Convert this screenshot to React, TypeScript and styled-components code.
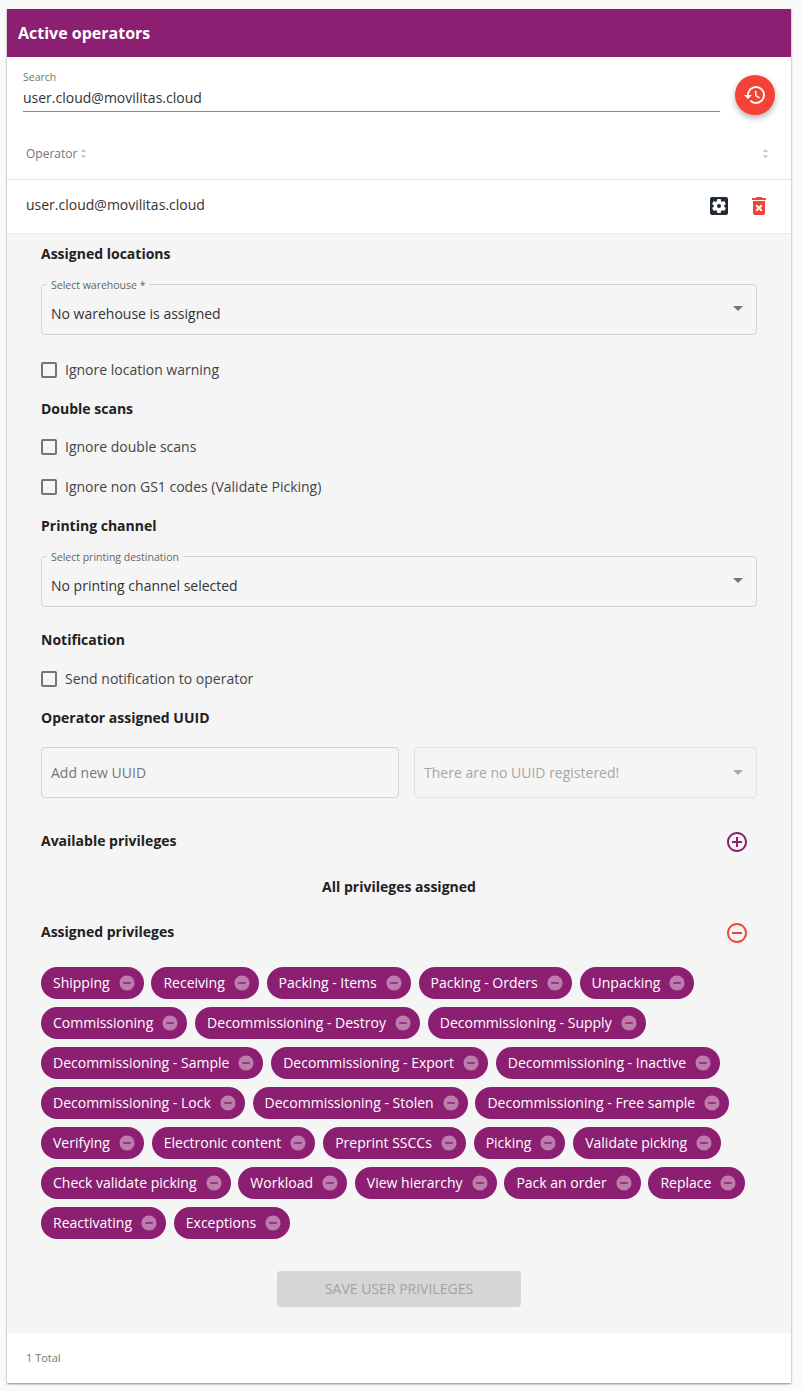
import React from "react";
import styled, { createGlobalStyle } from "styled-components";
import {
  MdAddCircleOutline,
  MdArrowDropDown,
  MdDeleteForever,
  MdRemoveCircle,
  MdRemoveCircleOutline,
  MdRestore,
  MdSettingsApplications,
  MdUnfoldMore,
} from "react-icons/md";

const GlobalStyle = createGlobalStyle`
  html, body {
    margin: 0;
    padding: 0;
    background-color: #fafafa;
    font-family: "Open Sans", "Liberation Sans", sans-serif;
    color: #212121;
  }
  * {
    box-sizing: border-box;
  }
`;

const Page = styled.div`
  width: 803px;
  height: 1391px;
  padding: 9px 12px 8px 7px;
`;

const Card = styled.div`
  width: 784px;
  background-color: #fff;
  box-shadow: 0 1px 2px rgba(0, 0, 0, 0.45);
`;

const Header = styled.div`
  height: 48px;
  display: flex;
  align-items: center;
  padding-left: 11px;
  background-color: #8c1f72;
  color: #fff;
  font-size: 16px;
  font-weight: 700;
`;

const SearchBar = styled.div`
  height: 75px;
  display: flex;
  align-items: flex-start;
  padding: 13px 16px 0;
  gap: 15px;
`;

const SearchField = styled.div`
  flex: 1;
  height: 42px;
  border-bottom: 1px solid #8a8a8a;
`;

const SearchLabel = styled.div`
  font-size: 10.5px;
  line-height: 14px;
  color: #757575;
`;

const SearchValue = styled.div`
  font-size: 14px;
  line-height: 20px;
  margin-top: 4px;
  color: #333;
`;

const Fab = styled.button`
  width: 40px;
  height: 40px;
  margin-top: 5px;
  border: none;
  border-radius: 50%;
  padding: 0;
  display: flex;
  align-items: center;
  justify-content: center;
  background-color: #f44336;
  color: #fff;
  font-size: 24px;
  box-shadow: 0 3px 6px rgba(0, 0, 0, 0.3);
`;

const HeadRow = styled.div`
  height: 48px;
  display: flex;
  align-items: center;
  justify-content: space-between;
  padding: 0 20px 4px 19px;
  border-bottom: 1px solid #e0e0e0;
  color: #757575;
  font-size: 12px;
`;

const HeadCell = styled.div`
  display: flex;
  align-items: center;
  gap: 1px;
  svg {
    font-size: 11px;
    color: #9e9e9e;
  }
`;

const OperatorRow = styled.div`
  height: 54px;
  display: flex;
  align-items: center;
  justify-content: space-between;
  padding: 0 19px 4px;
  border-bottom: 1px solid #eeeeee;
  font-size: 14px;
  color: #333;
`;

const RowActions = styled.div`
  display: flex;
  gap: 16px;
  margin-right: 1px;
  margin-top: 3px;
  font-size: 24px;
`;

const ActionIcon = styled.span<{ $color: string }>`
  display: flex;
  color: ${(p) => p.$color};
`;

const Panel = styled.div`
  height: 1099px;
  padding: 10px 34px 0;
  background-color: #f5f5f5;
`;

const SectionRow = styled.div<{ $top: number }>`
  margin-top: ${(p) => p.$top}px;
  height: 20px;
  display: flex;
  align-items: center;
  justify-content: space-between;
  font-size: 14px;
  font-weight: 700;
  line-height: 20px;
`;

const RoundIcon = styled.span<{ $color: string }>`
  display: flex;
  margin-right: 8px;
  margin-top: 2px;
  font-size: 24px;
  color: ${(p) => p.$color};
`;

const Outlined = styled.div<{ $top?: number; $disabled?: boolean; $labelled?: boolean }>`
  position: relative;
  height: 51px;
  margin-top: ${(p) => p.$top ?? 0}px;
  display: flex;
  align-items: center;
  justify-content: space-between;
  padding: ${(p) => (p.$labelled ? "7px" : "0")} 11px 0 9px;
  border: 1px solid ${(p) => (p.$disabled ? "#e3e3e3" : "#d4d4d4")};
  border-radius: 4px;
  font-size: 14px;
  color: ${(p) => (p.$disabled ? "#a6a6a6" : "#333")};
  svg {
    font-size: 24px;
    color: ${(p) => (p.$disabled ? "#a6a6a6" : "#757575")};
    margin: ${(p) => (p.$labelled ? "-10px" : "-2px")} -5px 0 0;
  }
`;

const FloatLabel = styled.span`
  position: absolute;
  top: -6px;
  left: 5px;
  padding: 0 4px;
  background-color: #f5f5f5;
  font-size: 10.5px;
  line-height: 13px;
  color: #666;
`;

const CheckRow = styled.label<{ $top: number }>`
  margin-top: ${(p) => p.$top}px;
  height: 20px;
  display: flex;
  align-items: center;
  gap: 8px;
  font-size: 14px;
  color: #444;
`;

const CheckText = styled.span`
  margin-bottom: 2px;
`;

const CheckBox = styled.span`
  width: 16px;
  height: 16px;
  border: 2px solid #757575;
  border-radius: 2px;
`;

const UuidRow = styled.div`
  margin-top: 19px;
  display: grid;
  grid-template-columns: 358px 343px;
  gap: 15px;
`;

const Placeholder = styled.span`
  color: #757575;
`;

const CenterNote = styled.div`
  margin-top: 26px;
  height: 20px;
  text-align: center;
  font-size: 14px;
  font-weight: 700;
  line-height: 20px;
`;

const ChipList = styled.div`
  margin-top: 25px;
  display: flex;
  flex-wrap: wrap;
  gap: 8px 7.8px;
`;

const Chip = styled.div`
  height: 32px;
  display: flex;
  align-items: center;
  padding: 0 8px 2px 12px;
  border-radius: 16px;
  background-color: #8c1f72;
  color: #fff;
  font-size: 14px;
  white-space: nowrap;
  svg {
    font-size: 18px;
    margin: 2px 0 0 8px;
    color: rgba(255, 255, 255, 0.42);
  }
`;

const ButtonRow = styled.div`
  margin-top: 32px;
  display: flex;
  justify-content: center;
`;

const SaveButton = styled.button`
  width: 244px;
  height: 36px;
  border: none;
  border-radius: 4px;
  padding: 0 0 2px;
  background-color: #d6d6d6;
  color: #a3a3a3;
  font-family: inherit;
  font-size: 14px;
`;

const Footer = styled.div`
  height: 50px;
  display: flex;
  align-items: center;
  padding: 0 0 2px 19px;
  font-size: 11px;
  color: #757575;
`;

const privileges = [
  "Shipping",
  "Receiving",
  "Packing - Items",
  "Packing - Orders",
  "Unpacking",
  "Commissioning",
  "Decommissioning - Destroy",
  "Decommissioning - Supply",
  "Decommissioning - Sample",
  "Decommissioning - Export",
  "Decommissioning - Inactive",
  "Decommissioning - Lock",
  "Decommissioning - Stolen",
  "Decommissioning - Free sample",
  "Verifying",
  "Electronic content",
  "Preprint SSCCs",
  "Picking",
  "Validate picking",
  "Check validate picking",
  "Workload",
  "View hierarchy",
  "Pack an order",
  "Replace",
  "Reactivating",
  "Exceptions",
];

function App() {
  return (
    <Page>
      <GlobalStyle />
      <Card>
        <Header>Active operators</Header>
        <SearchBar>
          <SearchField>
            <SearchLabel>Search</SearchLabel>
            <SearchValue>user.cloud@movilitas.cloud</SearchValue>
          </SearchField>
          <Fab>
            <MdRestore />
          </Fab>
        </SearchBar>
        <HeadRow>
          <HeadCell>
            Operator <MdUnfoldMore />
          </HeadCell>
          <HeadCell>
            <MdUnfoldMore />
          </HeadCell>
        </HeadRow>
        <OperatorRow>
          user.cloud@movilitas.cloud
          <RowActions>
            <ActionIcon $color="#212b36">
              <MdSettingsApplications />
            </ActionIcon>
            <ActionIcon $color="#f44336">
              <MdDeleteForever />
            </ActionIcon>
          </RowActions>
        </OperatorRow>
        <Panel>
          <SectionRow $top={0}>Assigned locations</SectionRow>
          <Outlined $top={20} $labelled>
            <FloatLabel>Select warehouse *</FloatLabel>
            No warehouse is assigned
            <MdArrowDropDown />
          </Outlined>
          <CheckRow $top={25}>
            <CheckBox />
            <CheckText>Ignore location warning</CheckText>
          </CheckRow>
          <SectionRow $top={19}>Double scans</SectionRow>
          <CheckRow $top={18}>
            <CheckBox />
            <CheckText>Ignore double scans</CheckText>
          </CheckRow>
          <CheckRow $top={20}>
            <CheckBox />
            <CheckText>Ignore non GS1 codes (Validate Picking)</CheckText>
          </CheckRow>
          <SectionRow $top={19}>Printing channel</SectionRow>
          <Outlined $top={20} $labelled>
            <FloatLabel>Select printing destination</FloatLabel>
            No printing channel selected
            <MdArrowDropDown />
          </Outlined>
          <SectionRow $top={23}>Notification</SectionRow>
          <CheckRow $top={19}>
            <CheckBox />
            <CheckText>Send notification to operator</CheckText>
          </CheckRow>
          <SectionRow $top={19}>Operator assigned UUID</SectionRow>
          <UuidRow>
            <Outlined>
              <Placeholder>Add new UUID</Placeholder>
            </Outlined>
            <Outlined $disabled>
              There are no UUID registered!
              <MdArrowDropDown />
            </Outlined>
          </UuidRow>
          <SectionRow $top={33}>
            Available privileges
            <RoundIcon $color="#8c1f72">
              <MdAddCircleOutline />
            </RoundIcon>
          </SectionRow>
          <CenterNote>All privileges assigned</CenterNote>
          <SectionRow $top={25}>
            Assigned privileges
            <RoundIcon $color="#f44336">
              <MdRemoveCircleOutline />
            </RoundIcon>
          </SectionRow>
          <ChipList>
            {privileges.map((name) => (
              <Chip key={name}>
                {name}
                <MdRemoveCircle />
              </Chip>
            ))}
          </ChipList>
          <ButtonRow>
            <SaveButton disabled>SAVE USER PRIVILEGES</SaveButton>
          </ButtonRow>
        </Panel>
        <Footer>1 Total</Footer>
      </Card>
    </Page>
  );
}

export default App;
